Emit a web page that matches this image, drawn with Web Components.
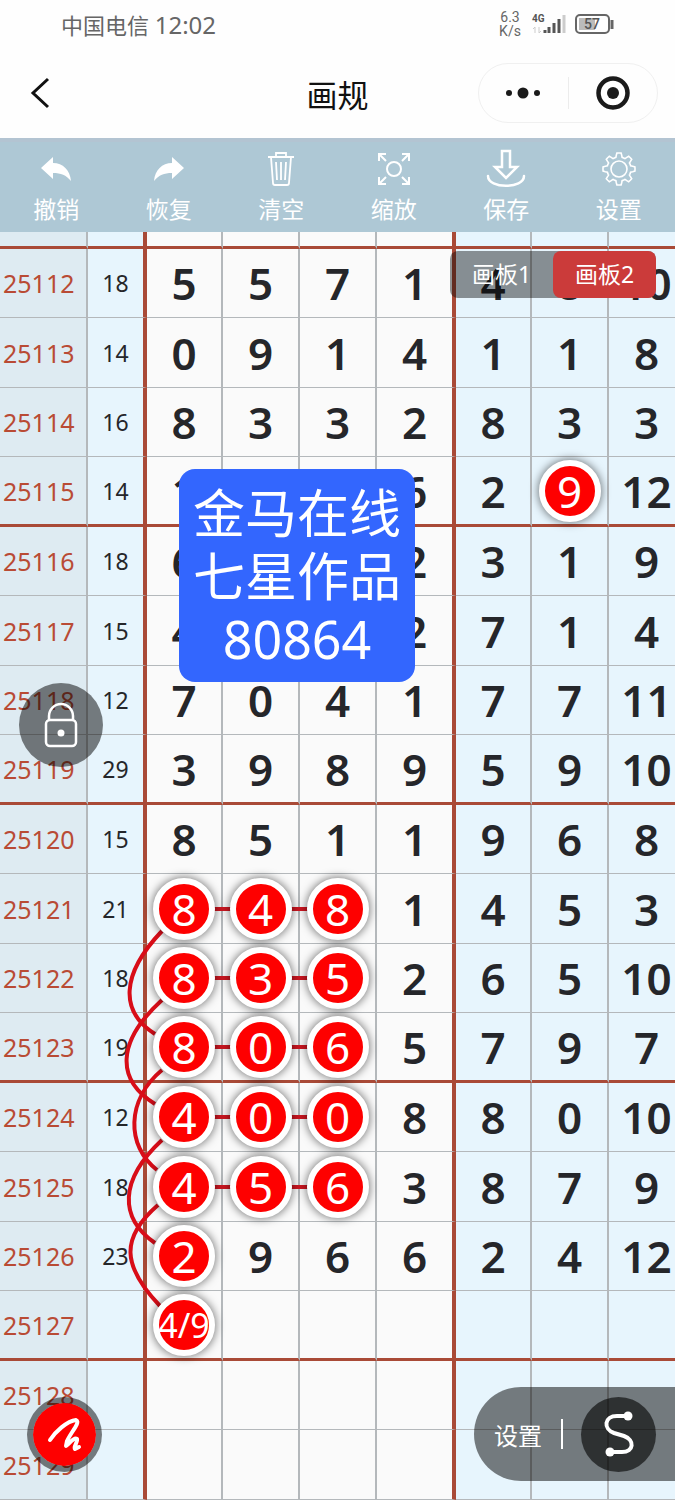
<!DOCTYPE html>
<html lang="zh-CN">
<head>
<meta charset="utf-8">
<meta name="viewport" content="width=device-width, initial-scale=1">
<title>画规</title>
<style>
  body {
    margin: 0;
    background: #fefefe;
    color: #222;
    font-family: "Noto Sans", "Noto Sans CJK SC", sans-serif;
    overflow-x: hidden;
  }
</style>
</head>
<body>
<status-bar></status-bar>
<nav-header>画规</nav-header>
<tool-bar>
  <tool-button data-icon="undo">撤销</tool-button>
  <tool-button data-icon="redo">恢复</tool-button>
  <tool-button data-icon="trash">清空</tool-button>
  <tool-button data-icon="zoom">缩放</tool-button>
  <tool-button data-icon="save">保存</tool-button>
  <tool-button data-icon="gear">设置</tool-button>
</tool-bar>
<draw-board>
  <trend-sheet></trend-sheet>
  <board-tabs slot="tabs"></board-tabs>
  <text-note slot="note">金马在线<br>七星作品<br>80864</text-note>
  <lock-button slot="lock"></lock-button>
  <pen-button slot="pen"></pen-button>
  <line-panel slot="panel">设置</line-panel>
</draw-board>

<script>
const define = (tag, css, markup, Base = HTMLElement) => {
  const template = document.createElement("template");
  template.innerHTML = `<style>${css}</style>${markup}`;

  class Component extends Base {
    constructor() {
      super();
      this.dom = this.attachShadow({ mode: "open" });
      this.dom.appendChild(document.importNode(template.content, true));
    }
  }

  if (window.customElements.get(tag) === undefined) {
    window.customElements.define(tag, Component);
  }
};

const resetButton = `
  button {
    margin: 0;
    padding: 0;
    border: 0;
    background: none;
    color: inherit;
    font: inherit;
    cursor: pointer;
  }
  svg { display: block; }
`;

/* Status bar */
define("status-bar", `
  :host {
    display: flex;
    align-items: center;
    justify-content: space-between;
    height: 48px;
    padding: 0 60px 0 61px;
    color: #666;
  }
  .carrier { font-size: 22px; line-height: 32px; padding-top: 2px; }
  .time { font-size: 24px; }
  .right { display: flex; align-items: center; gap: 8px; }
  .speed {
    font: 14px/14px Roboto, sans-serif;
    text-align: center;
    width: 26px;
  }
  .speed span { display: block; }
`, `
  <div class="carrier">中国电信 <span class="time">12:02</span></div>
  <div class="right">
    <div class="speed"><span>6.3</span><span>K/s</span></div>
    <svg width="36" height="24" viewBox="0 0 36 24">
      <text x="1" y="10" font-family="Roboto" font-size="10" font-weight="700" fill="#555">4G</text>
      <path d="M4 15v6M2 17l2-2M8 15v6l2-2" stroke="#ccc" fill="none"/>
      <path d="M14 18v3M18 15v6M23 11v10M28 7v14" stroke="#555" stroke-width="3"/>
      <path d="M33 3v18" stroke="#ccc" stroke-width="3"/>
    </svg>
    <svg width="40" height="22" viewBox="0 0 40 22">
      <rect x="1" y="2" width="33" height="18" rx="4" fill="none" stroke="#666" stroke-width="2"/>
      <rect x="4" y="5" width="16" height="12" fill="#bbb"/>
      <path d="M37 7v9" stroke="#666" stroke-width="3"/>
      <text x="9" y="16" font-family="Roboto" font-size="14" font-weight="500" fill="#555">57</text>
    </svg>
  </div>
`);

/* Title row */
define("nav-header", `
  ${resetButton}
  :host {
    display: grid;
    grid-template-columns: 1fr auto 1fr;
    align-items: center;
    height: 90px;
    padding: 0 17px 0 30px;
    box-sizing: border-box;
    color: #111;
  }
  h1 { margin: 0; font-size: 31px; line-height: 40px; font-weight: 400; padding: 4px 13px 0 0; }
  .capsule {
    justify-self: end;
    display: grid;
    grid-template-columns: 1fr 1fr;
    width: 180px;
    height: 60px;
    box-sizing: border-box;
    border: 1px solid #f0f0f0;
    border-radius: 30px;
  }
  .capsule button { display: grid; place-items: center; }
  .capsule button + button {
    background: linear-gradient(#ececec, #ececec) left center / 1px 32px no-repeat;
  }
`, `
  <button aria-label="返回">
    <svg width="20" height="32" viewBox="0 0 20 32"><path d="M18 2L3 16l15 14" fill="none" stroke="#111" stroke-width="3"/></svg>
  </button>
  <h1><slot></slot></h1>
  <div class="capsule">
    <button aria-label="更多">
      <svg width="38" height="12" viewBox="0 0 38 12"><g fill="#1a1a1a"><circle cx="4" cy="6" r="3"/><circle cx="18" cy="6" r="5.5"/><circle cx="32" cy="6" r="3"/></g></svg>
    </button>
    <button aria-label="关闭">
      <svg width="34" height="34" viewBox="0 0 34 34"><circle cx="17" cy="17" r="14.500" fill="none" stroke="#1a1a1a" stroke-width="4.5"/><circle cx="17" cy="17" r="6" fill="#1a1a1a"/></svg>
    </button>
  </div>
`);

/* Toolbar */
define("tool-bar", `
  :host {
    display: grid;
    grid-template-columns: repeat(6, 1fr);
    padding: 7px 0;
    background: #aec8d5;
    border-top: 4px solid #b3c4d2;
    color: #fff;
  }
`, `<slot></slot>`);

const gear = () => {
  // eight rounded teeth around the ring
  const points = [];
  for (let i = 0; i < 96; i++) {
    const a = (i / 96) * Math.PI * 2 - Math.PI / 2;
    const c = Math.cos(a * 8);
    const r = 14 + 2 * Math.max(-1, Math.min(1, c * 2.2));
    points.push(`${(20 + r * Math.cos(a)).toFixed(1)} ${(20 + r * Math.sin(a)).toFixed(1)}`);
  }
  return `<path d="M${points.join("L")}Z" stroke-width="1.6"/><circle cx="20" cy="20" r="8" stroke-width="1.6"/>`;
};

const icons = {
  undo: `<path d="M5 19L17 8v6c10 0 17 7 18 18C30 26 25 24 17 24v6z" fill="#fff" stroke="none"/>`,
  redo: `<path d="M35 19L23 8v6C13 14 6 21 5 32c5-6 10-8 18-8v6z" fill="#fff" stroke="none"/>`,
  trash: `<path d="M7 8h26M15 8V4h10v4M10 8l2 26q0 2 2 2h12q2 0 2-2l2-26M15 13l1 18M20 13v18M25 13l-1 18" stroke-width="1.8"/>`,
  zoom: `<circle cx="20" cy="20" r="7" stroke-width="2"/><path d="M5 12V5h7M5 5l7 7M28 5h7v7M35 5l-7 7M5 28v7h7M5 35l7-7M28 35h7v-7M35 35l-7-7" stroke-width="2"/>`,
  save: `<path d="M16 2h8v16h7L20 29 9 18h7z" stroke-width="2.5"/><path d="M2 27c0 13 36 13 36 0" stroke-width="2.5" stroke-linecap="round"/>`,
  gear: gear()
};

class IconBase extends HTMLElement {
  connectedCallback() {
    this.dom.querySelector("svg").innerHTML = icons[this.getAttribute("data-icon")] || "";
  }
}

define("tool-button", `
  ${resetButton}
  :host { display: block; }
  button {
    display: flex;
    flex-direction: column;
    align-items: center;
    gap: 4px;
    width: 100%;
    font-size: 23px;
    line-height: 32px;
  }
`, `
  <button>
    <svg width="40" height="40" viewBox="0 0 40 40" fill="none" stroke="#fff"></svg>
    <span><slot></slot></span>
  </button>
`, IconBase);

/* Board, holds the sheet and everything that floats over it */
define("draw-board", `
  :host { display: block; position: relative; overflow: hidden; }
  slot[name] { display: block; position: absolute; z-index: 3; }
  slot[name="tabs"] { top: 19px; right: 19px; }
  slot[name="note"] { top: 237px; left: 179px; }
  slot[name="lock"] { top: 451px; left: 19px; }
  slot[name="pen"] { bottom: 28px; left: 27px; }
  slot[name="panel"] { bottom: 19px; right: 0; }
`, `
  <slot></slot>
  <slot name="tabs"></slot>
  <slot name="note"></slot>
  <slot name="lock"></slot>
  <slot name="pen"></slot>
  <slot name="panel"></slot>
`);

define("ball-mark", `
  :host {
    display: inline-flex;
    align-items: center;
    justify-content: center;
    position: relative;
    z-index: 2;
    width: 62px;
    height: 62px;
    box-sizing: border-box;
    border: 6px solid #fff;
    border-radius: 50%;
    background: #fe0000;
    box-shadow: 0 0 8px 1px rgba(0, 0, 0, 0.5);
    color: #fff;
    font-size: 44px;
    line-height: 50px;
    font-weight: 400;
    vertical-align: top;
    white-space: nowrap;
  }
  :host([data-small]) { font-size: 34px; }
`, `<slot></slot>`);

/* issue, sum, seven numbers; * marks a ball, - after it a link to the next one */
const rows = [
  "25112 18 5 5 7 1 4 8 10",
  "25113 14 0 9 1 4 1 1 8",
  "25114 16 8 3 3 2 8 3 3",
  "25115 14 1 _ _ 6 2 9* 12",
  "25116 18 6 _ _ 2 3 1 9",
  "25117 15 4 _ _ 2 7 1 4",
  "25118 12 7 0 4 1 7 7 11",
  "25119 29 3 9 8 9 5 9 10",
  "25120 15 8 5 1 1 9 6 8",
  "25121 21 8*- 4*- 8* 1 4 5 3",
  "25122 18 8*- 3*- 5* 2 6 5 10",
  "25123 19 8*- 0*- 6* 5 7 9 7",
  "25124 12 4*- 0*- 0* 8 8 0 10",
  "25125 18 4*- 5*- 6* 3 8 7 9",
  "25126 23 2* 9 6 6 2 4 12",
  "25127 _ 4/9* _ _ _ _ _ _",
  "25128 _ _ _ _ _ _ _ _",
  "25129 _ _ _ _ _ _ _ _"
];

const cell = value => {
  if (value === "_") return "<td></td>";
  const text = value.replace(/[*-]/g, "");
  if (!value.includes("*")) return `<td>${text}</td>`;
  const link = value.includes("-") ? ` class="link"` : "";
  const small = text.length > 1 ? " data-small" : "";
  return `<td${link}><ball-mark${small}>${text}</ball-mark></td>`;
};

const line = row => {
  const [issue, ...values] = row.split(" ");
  return `<tr><th scope="row">${issue}</th>${values.map(cell).join("")}</tr>`;
};

define("trend-sheet", `
  :host { display: block; position: relative; width: 100%; min-width: 686px; }
  table {
    width: 100%;
    table-layout: fixed;
    border-collapse: separate;
    border-spacing: 0;
  }
  .issue { width: 88px; }
  .sum { width: 59px; }
  .first { width: 76px; }
  .mid { width: 77px; }
  .edge { width: 79px; }
  tr { height: 70px; }
  tr:nth-child(even) { height: 69px; }
  tr.top { height: 17px; }
  th, td {
    box-sizing: border-box;
    height: inherit;
    padding: 0;
    border-right: 2px solid #b4b8bb;
    border-bottom: 1px solid #b4b8bb;
    background: #fafafa;
    color: #25262a;
    text-align: center;
    vertical-align: middle;
    font-size: 44px;
    line-height: 62px;
    font-weight: 600;
  }
  th {
    padding-left: 3px;
    background: #deebf2;
    color: #b94b35;
    font-size: 25px;
    font-weight: 400;
    text-align: left;
  }
  td:nth-child(2) { font-size: 23px; font-weight: 400; }
  td:nth-child(2), td:nth-child(n + 7) { background: #e7f5fd; }
  td:nth-child(2), td:nth-child(6) { border-right: 4px solid #a94a37; }
  tr:nth-child(4n + 1) > * { border-bottom: 3px solid #a94a37; }
  .link { position: relative; }
  .link::after {
    content: "";
    position: absolute;
    z-index: 1;
    top: 50%;
    left: 50%;
    width: 100%;
    height: 4px;
    margin-top: -2px;
    background: #cf1722;
  }
  svg {
    position: absolute;
    z-index: 1;
    top: 0;
    left: 0;
    width: 100%;
    height: 100%;
    fill: none;
    stroke: #d80d18;
    stroke-width: 4;
  }
`, `
  <table>
    <colgroup>
      <col class="issue"><col class="sum"><col class="first"><col class="mid"><col class="mid"><col class="edge"><col class="first"><col class="mid"><col class="mid">
    </colgroup>
    <tbody>
      <tr class="top"><th></th>${"<td></td>".repeat(8)}</tr>
      ${rows.map(line).join("")}
    </tbody>
  </table>
  <svg viewBox="0 232 686 1268" preserveAspectRatio="none">
    <path d="M162 931C120 975 120 1012 155 1034"/>
    <path d="M162 1000C116 1042 116 1080 155 1104"/>
    <path d="M162 1070C126 1100 126 1146 157 1170"/>
    <path d="M162 1140C119 1180 119 1218 155 1243"/>
    <path d="M158 1205C120 1238 122 1266 160 1306"/>
  </svg>
`);

define("board-tabs", `
  ${resetButton}
  :host {
    display: grid;
    grid-template-columns: 1fr 1fr;
    width: 206px;
    border-radius: 8px;
    background: rgba(0, 0, 0, 0.42);
    color: #fff;
    font-size: 23px;
    line-height: 47px;
  }
  .active { border-radius: 8px; background: #cb3b3a; }
`, `<button>画板1</button><button class="active">画板2</button>`);

define("text-note", `
  :host {
    display: block;
    padding: 12px 14px;
    border-radius: 16px;
    background: #3366fe;
    color: #fff;
    font-size: 52px;
    line-height: 63px;
    text-align: center;
    white-space: nowrap;
  }
`, `<slot></slot>`);

define("lock-button", `
  ${resetButton}
  :host { display: block; }
  button {
    display: grid;
    place-items: center;
    width: 84px;
    height: 84px;
    border-radius: 50%;
    background: rgba(0, 0, 0, 0.5);
  }
`, `
  <button aria-label="锁定">
    <svg width="36" height="46" viewBox="0 0 36 46" fill="none" stroke="#fff" stroke-width="2.5">
      <rect x="3" y="18" width="30" height="26" rx="4"/>
      <path d="M6 18v-4a12 12 0 0 1 24 0v4"/>
      <circle cx="18" cy="31" r="3.5" fill="#fff" stroke="none"/>
    </svg>
  </button>
`);

define("pen-button", `
  ${resetButton}
  :host { display: block; }
  button {
    display: grid;
    place-items: center;
    width: 75px;
    height: 75px;
    border: 6px solid rgba(0, 0, 0, 0.5);
    border-radius: 50%;
    background: #fe0000;
    background-clip: padding-box;
  }
`, `
  <button aria-label="画笔">
    <svg width="40" height="40" viewBox="0 0 40 40" fill="none" stroke="#fff" stroke-width="4" stroke-linecap="round" stroke-linejoin="round">
      <path d="M5 25C10 17 22 6 31 5C36 7 26 17 22 26L21 31C25 28 29 22 32 24C33 27 28 32 30 34L34 32"/>
    </svg>
  </button>
`);

define("line-panel", `
  ${resetButton}
  :host {
    display: flex;
    align-items: center;
    box-sizing: border-box;
    width: 201px;
    height: 94px;
    padding: 0 19px 0 20px;
    justify-content: space-between;
    border-radius: 47px 0 0 47px;
    background: rgba(0, 0, 0, 0.5);
    color: #fff;
    font-size: 24px;
    line-height: 32px;
  }
  .label { padding-top: 3px; }
  i { width: 2px; height: 30px; background: #fff; }
  .round {
    display: grid;
    place-items: center;
    width: 75px;
    height: 75px;
    border-radius: 50%;
    background: rgba(0, 0, 0, 0.6);
  }
`, `
  <button class="label"><slot></slot></button>
  <i></i>
  <button class="round" aria-label="连线">
    <svg width="32" height="48" viewBox="0 0 32 48" fill="none" stroke="#fff" stroke-width="4">
      <path d="M25 6H14C1 6 0 19 11 23L21 26C32 30 31 42 19 42H7"/>
      <circle cx="25" cy="6" r="4.5" fill="#fff" stroke="none"/>
      <circle cx="7" cy="42" r="4.5" fill="#fff" stroke="none"/>
    </svg>
  </button>
`);
</script>
</body>
</html>
